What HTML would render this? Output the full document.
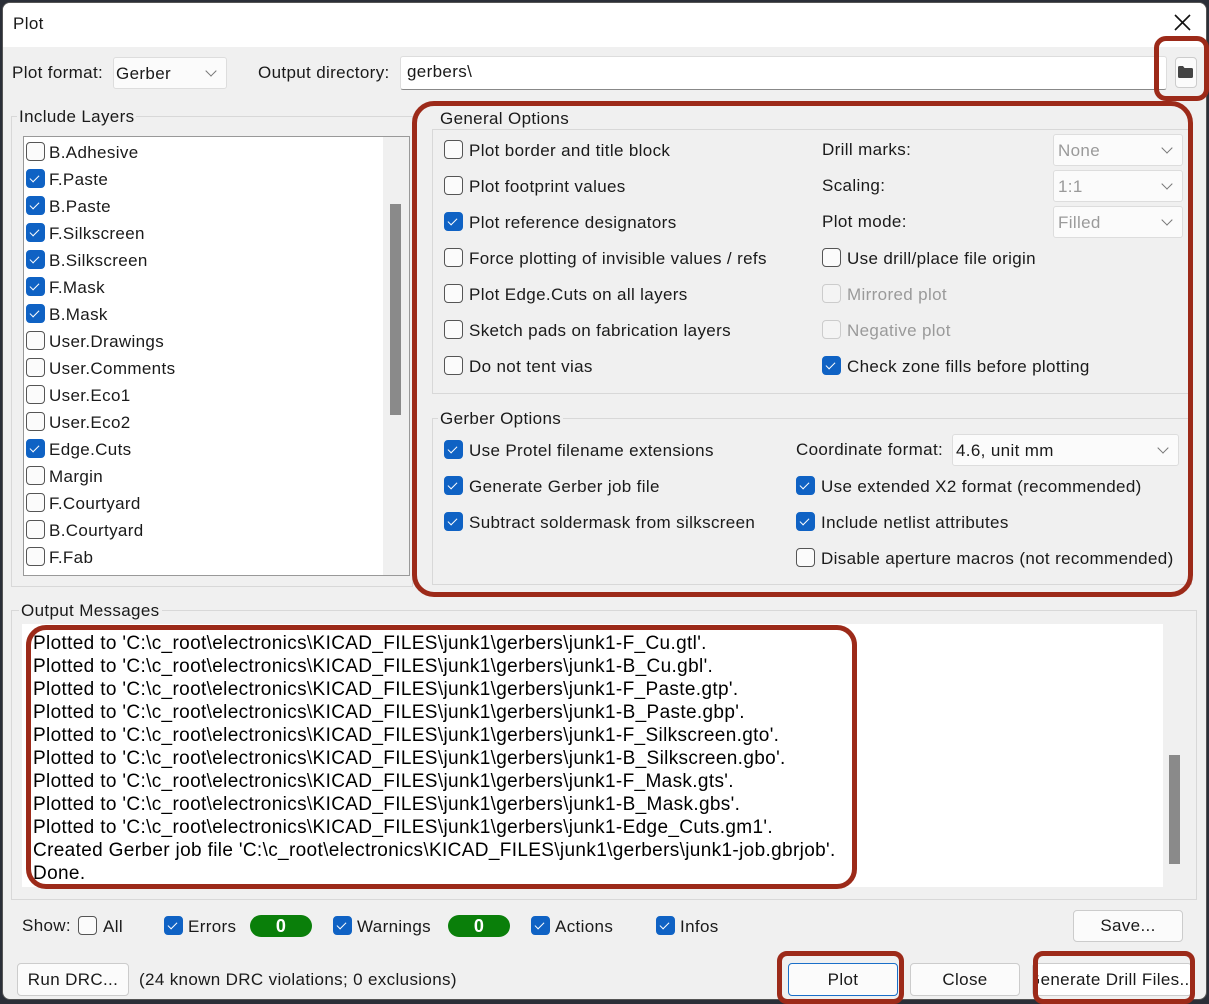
<!DOCTYPE html>
<html><head><meta charset="utf-8"><style>
*{box-sizing:border-box;margin:0;padding:0}
body{width:1209px;height:1004px;background:#2b2f38;position:relative;overflow:hidden;font-family:"Liberation Sans",sans-serif;font-size:17px;color:#1a1a1a;letter-spacing:0.35px}
.win{position:absolute;left:2px;top:2px;width:1205px;height:998px;background:#f0f0f0;border-radius:8px;overflow:hidden;border:1px solid #555}
.title{position:absolute;left:0;top:0;width:100%;height:44px;background:#fff}
.a{position:absolute;white-space:nowrap;line-height:22px}
.cb{position:absolute;width:19px;height:19px;border:1px solid #555;border-radius:4px;background:#fbfbfb}
.cb.on{background:#0f62c4;border-color:#0f62c4}
.cb.on:after{content:"";position:absolute;left:5px;top:3px;width:4px;height:8px;border:solid #fff;border-width:0 1.5px 1.5px 0;transform:rotate(45deg)}
.cb.dis{border-color:#ccc;background:#f4f4f4}
.grp{position:absolute;border:1px solid #d8d8d8}
.lbl{position:absolute;background:#f0f0f0;padding:0 2px;line-height:20px}
.combo{position:absolute;border:1px solid #ddd;border-radius:3px;background:#fbfbfb}
.combo:after{content:"";position:absolute;right:11px;top:50%;width:7px;height:7px;margin-top:-6px;border:solid #777;border-width:0 1px 1px 0;transform:rotate(45deg)}
.btn{position:absolute;border:1px solid #ccc;border-radius:4px;background:#fbfbfb;text-align:center}
.red{position:absolute;border:5px solid #9c2a19;border-radius:16px}
.msg{position:absolute;left:33px;font-family:"Liberation Sans",Arial,sans-serif;font-size:19px;line-height:23px;color:#000;white-space:pre;letter-spacing:0.35px}
.pill{position:absolute;width:62px;height:22px;border-radius:11px;background:#0a7f0a;color:#fff;font-weight:bold;text-align:center;line-height:22px;font-size:18px}
.dim{color:#9a9a9a}
</style></head><body>
<div class="win">
<div class="title"></div>
</div>
<div class="a" style="left:13px;top:13px">Plot</div>
<svg style="position:absolute;left:1174px;top:14px" width="17" height="17"><path d="M1 1L16 16M16 1L1 16" stroke="#111" stroke-width="1.6"/></svg>

<div class="a" style="left:12px;top:62px">Plot format:</div>
<div class="combo" style="left:113px;top:57px;width:114px;height:32px"></div>
<div class="a" style="left:116px;top:63px">Gerber</div>
<div class="a" style="left:258px;top:62px">Output directory:</div>
<div style="position:absolute;left:400px;top:56px;width:767px;height:34px;background:#fff;border:1px solid #ddd;border-bottom:1px solid #888;border-radius:3px"></div>
<div class="a" style="left:407px;top:61px">gerbers\</div>
<div class="btn" style="left:1175px;top:57px;width:22px;height:31px"></div>
<svg style="position:absolute;left:1178px;top:66px" width="15" height="12"><path d="M0 1.5Q0 0 1.5 0H5L6.5 2H13.5Q15 2 15 3.5V10.5Q15 12 13.5 12H1.5Q0 12 0 10.5Z" fill="#444"/></svg>

<div class="grp" style="left:11px;top:116px;width:402px;height:471px"></div>
<div class="lbl" style="left:17px;top:107px">Include Layers</div>
<div style="position:absolute;left:23px;top:136px;width:387px;height:440px;background:#fff;border:1px solid #999"></div>
<div style="position:absolute;left:383px;top:137px;width:26px;height:438px;background:#f0f0f0"></div>
<div style="position:absolute;left:390px;top:204px;width:11px;height:211px;background:#8a8a8a"></div>

<div class="grp" style="left:432px;top:129px;width:760px;height:265px"></div>
<div class="lbl" style="left:438px;top:109px">General Options</div>
<div class="grp" style="left:432px;top:418px;width:760px;height:167px"></div>
<div class="lbl" style="left:438px;top:409px">Gerber Options</div>

<div class="a" style="left:822px;top:139px">Drill marks:</div>
<div class="a" style="left:822px;top:175px">Scaling:</div>
<div class="a" style="left:822px;top:211px">Plot mode:</div>
<div class="combo" style="left:1053px;top:134px;width:130px;height:32px"></div><div class="a dim" style="left:1058px;top:140px">None</div>
<div class="combo" style="left:1053px;top:170px;width:130px;height:32px"></div><div class="a dim" style="left:1058px;top:176px">1:1</div>
<div class="combo" style="left:1053px;top:206px;width:130px;height:32px"></div><div class="a dim" style="left:1058px;top:212px">Filled</div>

<div class="a" style="left:796px;top:439px">Coordinate format:</div>
<div class="combo" style="left:952px;top:434px;width:227px;height:32px"></div><div class="a" style="left:956px;top:440px">4.6, unit mm</div>

<div class="grp" style="left:11px;top:610px;width:1186px;height:290px"></div>
<div class="lbl" style="left:19px;top:601px">Output Messages</div>
<div style="position:absolute;left:22px;top:624px;width:1141px;height:263px;background:#fff"></div>
<div style="position:absolute;left:1163px;top:624px;width:26px;height:263px;background:#f0f0f0"></div>
<div style="position:absolute;left:1169px;top:755px;width:11px;height:109px;background:#8a8a8a"></div>
<div class="msg" style="top:632px">Plotted to 'C:\c_root\electronics\KICAD_FILES\junk1\gerbers\junk1-F_Cu.gtl'.
Plotted to 'C:\c_root\electronics\KICAD_FILES\junk1\gerbers\junk1-B_Cu.gbl'.
Plotted to 'C:\c_root\electronics\KICAD_FILES\junk1\gerbers\junk1-F_Paste.gtp'.
Plotted to 'C:\c_root\electronics\KICAD_FILES\junk1\gerbers\junk1-B_Paste.gbp'.
Plotted to 'C:\c_root\electronics\KICAD_FILES\junk1\gerbers\junk1-F_Silkscreen.gto'.
Plotted to 'C:\c_root\electronics\KICAD_FILES\junk1\gerbers\junk1-B_Silkscreen.gbo'.
Plotted to 'C:\c_root\electronics\KICAD_FILES\junk1\gerbers\junk1-F_Mask.gts'.
Plotted to 'C:\c_root\electronics\KICAD_FILES\junk1\gerbers\junk1-B_Mask.gbs'.
Plotted to 'C:\c_root\electronics\KICAD_FILES\junk1\gerbers\junk1-Edge_Cuts.gm1'.
Created Gerber job file 'C:\c_root\electronics\KICAD_FILES\junk1\gerbers\junk1-job.gbrjob'.
Done.</div>

<div class="a" style="left:22px;top:915px">Show:</div>
<div class="cb" style="left:78px;top:916px"></div><div class="a" style="left:103px;top:916px">All</div>
<div class="cb on" style="left:164px;top:916px"></div><div class="a" style="left:188px;top:916px">Errors</div>
<div class="pill" style="left:250px;top:915px">0</div>
<div class="cb on" style="left:333px;top:916px"></div><div class="a" style="left:357px;top:916px">Warnings</div>
<div class="pill" style="left:448px;top:915px">0</div>
<div class="cb on" style="left:531px;top:916px"></div><div class="a" style="left:555px;top:916px">Actions</div>
<div class="cb on" style="left:656px;top:916px"></div><div class="a" style="left:680px;top:916px">Infos</div>
<div class="btn" style="left:1073px;top:910px;width:110px;height:32px;line-height:30px">Save...</div>

<div class="btn" style="left:17px;top:963px;width:112px;height:33px;line-height:31px">Run DRC...</div>
<div class="a" style="left:139px;top:969px">(24 known DRC violations; 0 exclusions)</div>
<div class="btn" style="left:788px;top:963px;width:110px;height:33px;line-height:31px;border-color:#1a6fc9">Plot</div>
<div class="btn" style="left:910px;top:963px;width:110px;height:33px;line-height:31px">Close</div>
<div class="btn" style="left:1032px;top:963px;width:160px;height:33px;line-height:31px;overflow:hidden;background:#fff;text-align:left"><span style="position:absolute;left:-6px;top:0;white-space:nowrap">Generate Drill Files...</span></div>

<div class="red" style="left:1154px;top:36px;width:55px;height:65px;border-radius:12px"></div>
<div class="red" style="left:412px;top:101px;width:781px;height:496px;border-radius:22px"></div>
<div class="red" style="left:26px;top:625px;width:831px;height:264px;border-radius:20px"></div>
<div class="red" style="left:777px;top:951px;width:127px;height:53px;border-radius:10px"></div>
<div class="red" style="left:1033px;top:951px;width:162px;height:53px;border-radius:10px"></div>

<div id="items"></div>
<script>
var h='';
function cb(x,y,on,t,tx){h+='<div class="cb '+(on==1?'on':on==2?'dis':'')+'" style="left:'+x+'px;top:'+(y-10)+'px"></div><div class="a '+(on==2?'dim':'')+'" style="left:'+tx+'px;top:'+(y-10)+'px">'+t+'</div>';}
var L=[['B.Adhesive',0],['F.Paste',1],['B.Paste',1],['F.Silkscreen',1],['B.Silkscreen',1],['F.Mask',1],['B.Mask',1],['User.Drawings',0],['User.Comments',0],['User.Eco1',0],['User.Eco2',0],['Edge.Cuts',1],['Margin',0],['F.Courtyard',0],['B.Courtyard',0],['F.Fab',0]];
L.forEach(function(l,i){cb(26,152+27*i,l[1],l[0],49);});
var G=[['Plot border and title block',0],['Plot footprint values',0],['Plot reference designators',1],['Force plotting of invisible values / refs',0],['Plot Edge.Cuts on all layers',0],['Sketch pads on fabrication layers',0],['Do not tent vias',0]];
G.forEach(function(l,i){cb(444,150+36*i,l[1],l[0],469);});
cb(822,258,0,'Use drill/place file origin',847);
cb(822,294,2,'Mirrored plot',847);
cb(822,330,2,'Negative plot',847);
cb(822,366,1,'Check zone fills before plotting',847);
cb(444,450,1,'Use Protel filename extensions',469);
cb(444,486,1,'Generate Gerber job file',469);
cb(444,522,1,'Subtract soldermask from silkscreen',469);
cb(796,486,1,'Use extended X2 format (recommended)',821);
cb(796,522,1,'Include netlist attributes',821);
cb(796,558,0,'Disable aperture macros (not recommended)',821);
document.getElementById('items').innerHTML=h;
</script>
</body></html>
